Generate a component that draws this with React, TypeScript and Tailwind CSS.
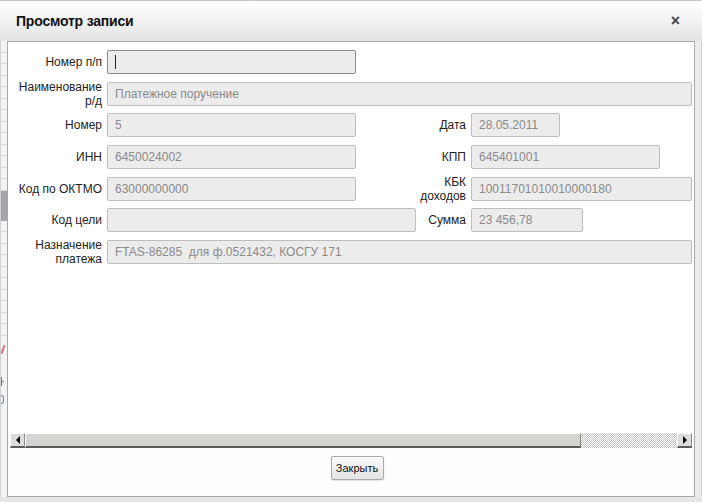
import React from "react";

type Field = {
  label: React.ReactNode;
  value?: string;
  width?: string;
  span?: boolean;
  active?: boolean;
};

const Label = ({ children }: { children: React.ReactNode }) => (
  <div className="flex flex-col items-end justify-center whitespace-nowrap text-right text-[12px] leading-[14px] text-[#222]">
    {children}
  </div>
);

const Input = ({ value, width, span, active }: Omit<Field, "label">) => (
  <div
    className={`flex h-[24px] items-center whitespace-pre rounded-[2px] border bg-[#ececec] pl-[7px] text-[12px] text-[#8a8a8a] ${
      active ? "border-[#8c8c8c]" : "border-[#bdbdbd]"
    } ${span ? "col-span-3" : ""} ${width ?? ""}`}
  >
    {active && <span className="h-[14px] w-px bg-[#222]" />}
    {value}
  </div>
);

// what shows of the page behind the dialog on its left edge
const BackStrip = () => {
  const rows = (n: number) =>
    Array.from({ length: n }).map((_, i) => (
      <div key={i} className="h-[11.5px] shrink-0 border-b border-[#d8d8d8]" />
    ));
  return (
    <div className="relative flex w-[7px] flex-col overflow-hidden border-l border-[#cfcfcf] bg-[#f3f3f3]">
      {rows(13)}
      <div className="h-[30px] shrink-0 bg-[#a4a4ac]" />
      {rows(10)}
      <div className="absolute left-[1px] top-[304px] h-[9px] w-[2px] rotate-[20deg] bg-[#d07080]" />
      <div className="absolute left-0 top-[336px] h-[9px] w-[1px] bg-[#777]" />
      <div className="absolute left-0 top-[340px] h-[1px] w-[3px] bg-[#777]" />
      <div className="absolute left-0 top-[354px] h-[9px] w-[3px] rounded-r-full border border-l-0 border-[#7080b0]" />
      <div className="flex-1" />
    </div>
  );
};

const ScrollBar = () => (
  <div className="mx-[2px] flex h-[15px]">
    <div className="flex w-[15px] items-center justify-center border-t border-l border-b-2 border-r border-t-white border-l-white border-b-[#5c5c5c] border-r-[#8a8a8a] bg-[#dcdcd8]">
      <div className="h-0 w-0 border-y-[4px] border-r-[4px] border-y-transparent border-r-black" />
    </div>
    <div className="w-[556px] border-t border-l border-b-2 border-r border-t-white border-l-white border-b-[#5c5c5c] border-r-[#8a8a8a] bg-[#d4d4d0]" />
    <div className="flex-1 bg-[repeating-conic-gradient(#c4c4c4_0%_25%,#ffffff_0%_50%)] bg-[length:2px_2px]" />
    <div className="flex w-[15px] items-center justify-center border-t border-l border-b-2 border-r border-t-white border-l-white border-b-[#5c5c5c] border-r-[#8a8a8a] bg-[#dcdcd8]">
      <div className="h-0 w-0 border-y-[4px] border-l-[4px] border-y-transparent border-l-black" />
    </div>
  </div>
);

const App = () => {
  return (
    <div className="flex h-[502px] w-[702px] flex-col overflow-hidden bg-[#ebebeb] font-['Liberation_Sans',Arial,sans-serif]">
      <div className="flex h-[41px] shrink-0 items-center justify-between border-t border-[#c8c8c8] bg-gradient-to-b from-white to-[#e4e4e4] pl-[16px] pr-[22px]">
        <span className="text-[14px] font-bold tracking-[-0.2px] text-[#111]">Просмотр записи</span>
        <span className="text-[16px] font-bold leading-none text-[#444]">×</span>
      </div>

      <div className="flex h-[456px] shrink-0">
        <BackStrip />
        <div className="flex w-[688px] flex-col border border-[#a8a8a8] bg-white">
          <div className="h-[391px] pl-[8px] pt-[8px]">
            <div className="grid grid-cols-[86px_309px_45px_221px] auto-rows-[24px] gap-x-[5px] gap-y-[7.7px]">
              <Label>Номер п/п</Label>
              <Input active width="w-[249px]" />
              <div className="col-span-2" />

              <Label>
                <span>Наименование</span>
                <span>р/д</span>
              </Label>
              <Input span value="Платежное поручение" />

              <Label>Номер</Label>
              <Input value="5" width="w-[249px]" />
              <Label>Дата</Label>
              <Input value="28.05.2011" width="w-[89px] text-[11px]" />

              <Label>ИНН</Label>
              <Input value="6450024002" width="w-[249px]" />
              <Label>КПП</Label>
              <Input value="645401001" width="w-[189px]" />

              <Label>Код по ОКТМО</Label>
              <Input value="63000000000" width="w-[249px]" />
              <Label>
                <span>КБК</span>
                <span>доходов</span>
              </Label>
              <Input value="10011701010010000180" />

              <Label>Код цели</Label>
              <Input width="w-[309px]" />
              <Label>Сумма</Label>
              <Input value="23 456,78" width="w-[112px]" />

              <Label>
                <span>Назначение</span>
                <span>платежа</span>
              </Label>
              <Input span value="FTAS-86285  для ф.0521432, КОСГУ 171" />
            </div>
          </div>

          <ScrollBar />

          <div className="flex flex-1 justify-center bg-[#fdfdfd] pl-[12px] pt-[8px]">
            <button
              type="button"
              className="h-[24px] w-[53px] rounded-[2px] border border-[#ababab] bg-gradient-to-b from-[#fbfbfb] to-[#e4e4e4] text-[11px] text-[#111] shadow-[0_1px_1px_rgba(0,0,0,0.1)]"
            >
              Закрыть
            </button>
          </div>
        </div>
        <div className="flex-1 border-r border-[#d0d0d0] bg-[#ececec]" />
      </div>
      <div className="flex-1 bg-[#e6e6e6]" />
    </div>
  );
};

export default App;
